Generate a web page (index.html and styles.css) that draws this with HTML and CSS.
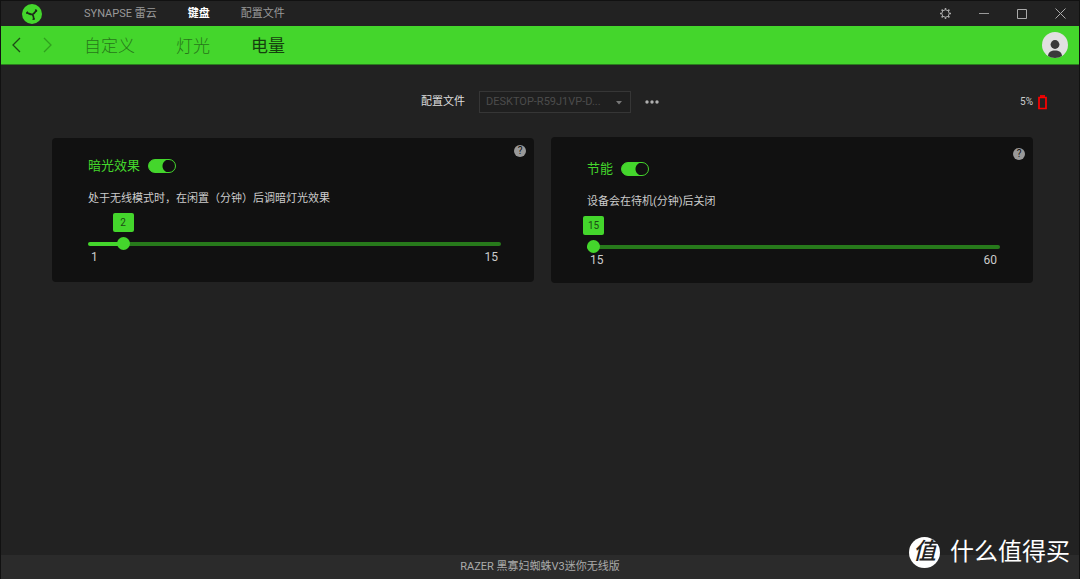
FILE: index.html
```html
<!DOCTYPE html>
<html lang="zh-CN">
<head>
<meta charset="utf-8">
<meta name="viewport" content="width=device-width, initial-scale=1">
<title>Razer Synapse</title>
<link rel="stylesheet" href="styles.css">
</head>
<body>
<div class="app">
  <header class="titlebar">
    <svg class="logo" viewBox="0 0 20 20" aria-hidden="true">
      <circle cx="10" cy="10" r="10" fill="#44d62c"/>
      <g fill="none" stroke="#1c2a19" stroke-linecap="round" stroke-linejoin="round">
        <path d="M10.500 10.500C9 10.600 7.500 9.800 5 8.800M10.500 10.500C12 9.800 13 8.500 14.300 6.500M10.500 10.500C11.500 11.800 11.700 13 11.800 15" stroke-width="1.700"/>
        <path d="M4.800 9.200 5.400 8M13.500 5.900 14.600 7M11 15.300 12.300 14.800" stroke-width="1.300"/>
      </g>
    </svg>
    <nav class="modules">
      <a class="module" href="#">SYNAPSE 雷云</a>
      <a class="module module-active" href="#">键盘</a>
      <a class="module" href="#">配置文件</a>
    </nav>
    <div class="window-controls">
      <button class="icon-button" type="button" aria-label="设置">
        <svg width="13" height="13" viewBox="0 0 13 13" fill="none" stroke="#aaa">
          <circle cx="6.500" cy="6.500" r="3.700"/>
          <path stroke-width="1.500" d="M6.500 1v1.800M6.500 10.200V12M1 6.500h1.800M10.200 6.500H12M2.600 2.600l1.300 1.300M9.100 9.100l1.300 1.300M2.600 10.400l1.300-1.300M9.100 3.900l1.300-1.300"/>
        </svg>
      </button>
      <button class="icon-button" type="button" aria-label="最小化">
        <svg width="11" height="11" viewBox="0 0 11 11" fill="none" stroke="#999"><path d="M0 5.500h10"/></svg>
      </button>
      <button class="icon-button" type="button" aria-label="最大化">
        <svg width="11" height="11" viewBox="0 0 11 11" fill="none" stroke="#aaa"><path d="M.5 1.500h9v9h-9z"/></svg>
      </button>
      <button class="icon-button" type="button" aria-label="关闭">
        <svg width="11" height="11" viewBox="0 0 11 11" fill="none" stroke="#aaa"><path d="m.5 .5 10 10M10.500 .5l-10 10"/></svg>
      </button>
    </div>
  </header>

  <div class="navbar">
    <button class="arrow" type="button" aria-label="后退">
      <svg width="9" height="16" viewBox="0 0 9 16" fill="none" stroke="#1d4a16" stroke-width="1.300"><path d="M8 1 1 8l7 7"/></svg>
    </button>
    <button class="arrow arrow-forward" type="button" aria-label="前进" disabled>
      <svg width="9" height="16" viewBox="0 0 9 16" fill="none" stroke="#2fa01e" stroke-width="1.300"><path d="m1 1 7 7-7 7"/></svg>
    </button>
    <nav class="tabs">
      <a class="tab" href="#">自定义</a>
      <a class="tab" href="#">灯光</a>
      <a class="tab tab-active" href="#">电量</a>
    </nav>
    <button class="avatar" type="button" aria-label="账户">
      <svg width="26" height="26" viewBox="0 0 26 26">
        <circle cx="13" cy="13" r="13" fill="#e0e0e0"/>
        <circle cx="13" cy="12.500" r="4.400" fill="#3a3a3a"/>
        <path fill="#3a3a3a" d="M6 24c.2-3.600 3.200-5.400 7-5.400s6.800 1.800 7 5.400c-2 1.300-4.500 2-7 2s-5-.7-7-2z"/>
      </svg>
    </button>
  </div>

  <main class="content">
    <div class="profile-bar">
      <div class="profile">
        <label class="profile-label" for="profile">配置文件</label>
        <span class="select-wrap">
          <select class="profile-select" id="profile"><option>DESKTOP-R59J1VP-D...</option></select>
          <svg class="select-caret" width="6" height="4" viewBox="0 0 6 4" fill="#777"><path d="M0 0h6L3 3.500z"/></svg>
        </span>
        <button class="icon-button more" type="button" aria-label="更多">
          <svg width="14" height="4" viewBox="0 0 14 4" fill="#b0b0b0"><circle cx="2" cy="2" r="1.700"/><circle cx="7" cy="2" r="1.700"/><circle cx="12" cy="2" r="1.700"/></svg>
        </button>
      </div>
      <div class="battery">
        <span>5%</span>
        <svg width="9" height="17" viewBox="0 0 9 17" fill="none" stroke="#f00" stroke-width="1.700"><path d="M1 3.500h7V14.500H1z"/><path d="M2 2h5"/></svg>
      </div>
    </div>

    <div class="cards">
      <section class="card">
        <button class="help" type="button" aria-label="帮助">?</button>
        <div class="card-head">
          <label class="card-title" for="dim">暗光效果</label>
          <input class="toggle" id="dim" type="checkbox" checked>
        </div>
        <label class="description" for="dim-minutes">处于无线模式时，在闲置（分钟）后调暗灯光效果</label>
        <div class="slider" style="--pos: 7.14%">
          <div class="bubble-rail"><output class="bubble" for="dim-minutes">2</output></div>
          <input class="range" id="dim-minutes" type="range" min="1" max="15" value="2">
          <div class="limits"><span>1</span><span>15</span></div>
        </div>
      </section>

      <section class="card card-power">
        <button class="help" type="button" aria-label="帮助">?</button>
        <div class="card-head">
          <label class="card-title" for="power">节能</label>
          <input class="toggle" id="power" type="checkbox" checked>
        </div>
        <label class="description" for="power-minutes">设备会在待机(分钟)后关闭</label>
        <div class="slider" style="--pos: 0%">
          <div class="bubble-rail"><output class="bubble" for="power-minutes">15</output></div>
          <input class="range" id="power-minutes" type="range" min="15" max="60" value="15">
          <div class="limits"><span>15</span><span>60</span></div>
        </div>
      </section>
    </div>
  </main>

  <footer class="statusbar">RAZER 黑寡妇蜘蛛V3迷你无线版</footer>
  <div class="watermark"><span class="watermark-badge">值</span><span>什么值得买</span></div>
</div>
</body>
</html>
```
FILE: styles.css
```css
* { box-sizing: border-box; }

body {
  margin: 0;
  background: #222;
  color: #ccc;
  font: 11px/18px Roboto, "Noto Sans CJK SC", sans-serif;
}

button, input, select { margin: 0; font: inherit; }
button { padding: 0; border: 0; background: none; color: inherit; }
a { color: inherit; text-decoration: none; }
svg { display: block; }

.app {
  position: relative;
  display: flex;
  flex-direction: column;
  min-height: 100vh;
  border: 1px solid #111;
  border-bottom: 0;
}

.titlebar {
  display: flex;
  align-items: center;
  height: 25px;
  padding: 0 13px 0 21px;
}
.logo { width: 20px; height: 20px; }
.modules { display: flex; gap: 31px; margin-left: 42px; color: #999; }
.module-active { color: #fff; font-weight: 700; }
.window-controls { display: flex; gap: 27px; align-items: center; margin-left: auto; }
.icon-button { display: grid; place-items: center; min-width: 11px; }

.navbar {
  display: flex;
  align-items: center;
  height: 39px;
  padding: 0 11px;
  background: #44d62c;
  border-bottom: 1px solid #2b7d1e;
}
.arrow-forward { margin-left: 22px; }
.tabs {
  display: flex;
  gap: 41px;
  margin-left: 32px;
  padding-top: 2px;
  color: #27771a;
  font-size: 17px;
  font-weight: 300;
  line-height: 24px;
}
.tab-active { color: #153f0e; font-weight: 400; }
.avatar { margin-left: auto; }

.content { flex: 1; padding: 26px 46px 0 51px; }

.profile-bar {
  display: grid;
  grid-template-columns: 1fr auto 1fr;
  align-items: center;
  margin: 0 -14px 0 -19px;
}
.profile { grid-column: 2; display: flex; align-items: center; }
.profile-label { color: #ddd; }
.select-wrap { position: relative; margin: 0 14px; }
.profile-select {
  display: block;
  width: 152px;
  height: 22px;
  padding: 0 20px 0 6px;
  border: 1px solid #363636;
  border-radius: 0;
  background: #1f1f1f;
  color: #4c4c4c;
  appearance: none;
}
.select-caret { position: absolute; top: 10px; right: 9px; pointer-events: none; }
.battery { display: flex; align-items: center; justify-content: flex-end; gap: 5px; font-size: 10px; }

.cards {
  display: grid;
  grid-template-columns: 1fr 1fr;
  gap: 17px;
  align-items: center;
  margin-top: 24px;
}
.card {
  --top: 19px;
  position: relative;
  padding: var(--top) 33px 17px 36px;
  border-radius: 4px;
  background: #111;
}
.card-power { --top: 23px; padding-bottom: 15px; }
.card-head { display: flex; align-items: center; gap: 8px; height: 18px; }
.card-title { color: #44d62c; font-size: 13px; }
.toggle {
  width: 28px;
  height: 14px;
  border: 1px solid #44d62c;
  border-radius: 7px;
  background: #111;
  appearance: none;
}
.toggle:checked {
  background: radial-gradient(circle at 20px 6px, #111 6px, #44d62c 7px);
}
.help {
  position: absolute;
  top: calc(var(--top) - 12px);
  right: 8px;
  width: 12px;
  height: 12px;
  border-radius: 50%;
  background: #999;
  color: #111;
  font-size: 10px;
  line-height: 12px;
}
.description { display: block; margin-top: 15px; }

.slider { margin-top: 5px; }
.bubble-rail { display: flex; margin: 0 6px; }
.bubble {
  flex: none;
  width: 21px;
  margin-left: calc(var(--pos) - 10px);
  border-radius: 2px;
  background: #44d62c;
  color: #1d4a16;
  font-size: 10px;
  line-height: 19px;
  text-align: center;
}
.range {
  display: block;
  width: 100%;
  height: 13px;
  margin-top: 5px;
  background: none;
  appearance: none;
}
.range::-webkit-slider-runnable-track {
  height: 4px;
  border-radius: 2px;
  background: linear-gradient(to right, #44d62c calc(var(--pos) + 6px), #277a1b 0);
}
.range::-webkit-slider-thumb {
  width: 13px;
  height: 13px;
  margin-top: -5px;
  border-radius: 50%;
  background: #44d62c;
  appearance: none;
}
.limits {
  display: flex;
  justify-content: space-between;
  padding: 0 3px;
  font-size: 12px;
  line-height: 15px;
}

.statusbar {
  height: 24px;
  background: #2b2b2b;
  color: #aaa;
  line-height: 24px;
  text-align: center;
}

.watermark {
  position: absolute;
  right: 9px;
  bottom: 11px;
  display: flex;
  align-items: center;
  gap: 10px;
  color: #fff;
  font-size: 24px;
  line-height: 32px;
}
.watermark-badge {
  width: 31px;
  height: 31px;
  border-radius: 50%;
  background: #fff;
  color: #222;
  font-size: 23px;
  font-style: italic;
  font-weight: 500;
  line-height: 30px;
  text-align: center;
}
```
